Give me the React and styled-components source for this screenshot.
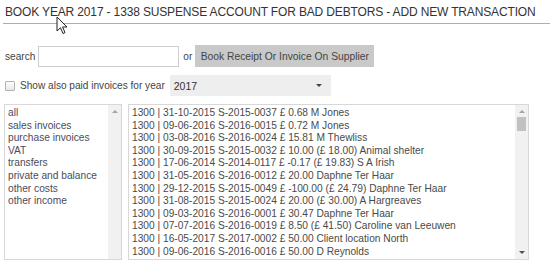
import styled, { createGlobalStyle } from 'styled-components'

const GlobalStyle = createGlobalStyle`
  html, body {
    margin: 0;
    padding: 0;
    background: #fff;
  }
  body {
    font-family: 'Liberation Sans', Arial, sans-serif;
    color: #444;
  }
`

const categories = [
  'all',
  'sales invoices',
  'purchase invoices',
  'VAT',
  'transfers',
  'private and balance',
  'other costs',
  'other income',
]

const invoices = [
  '1300 | 31-10-2015 S-2015-0037 £ 0.68 M Jones',
  '1300 | 09-06-2016 S-2016-0015 £ 0.72 M Jones',
  '1300 | 03-08-2016 S-2016-0024 £ 15.81 M Thewliss',
  '1300 | 30-09-2015 S-2015-0032 £ 10.00 (£ 18.00) Animal shelter',
  '1300 | 17-06-2014 S-2014-0117 £ -0.17 (£ 19.83) S A Irish',
  '1300 | 31-05-2016 S-2016-0012 £ 20.00 Daphne Ter Haar',
  '1300 | 29-12-2015 S-2015-0049 £ -100.00 (£ 24.79) Daphne Ter Haar',
  '1300 | 31-08-2015 S-2015-0024 £ 20.00 (£ 30.00) A Hargreaves',
  '1300 | 09-03-2016 S-2016-0001 £ 30.47 Daphne Ter Haar',
  '1300 | 07-07-2016 S-2016-0019 £ 8.50 (£ 41.50) Caroline van Leeuwen',
  '1300 | 16-05-2017 S-2017-0002 £ 50.00 Client location North',
  '1300 | 09-06-2016 S-2016-0016 £ 50.00 D Reynolds',
]

const App = () => {
  return (
    <Page>
      <GlobalStyle />
      <Title>BOOK YEAR 2017 - 1338 SUSPENSE ACCOUNT FOR BAD DEBTORS - ADD NEW TRANSACTION</Title>

      <SearchRow>
        <Label>search</Label>
        <SearchInput type="text" />
        <Label>or</Label>
        <GrayButton>Book Receipt Or Invoice On Supplier</GrayButton>
      </SearchRow>

      <FilterRow>
        <Check />
        <Label>Show also paid invoices for year</Label>
        <YearSelect>
          <span>2017</span>
          <Caret />
        </YearSelect>
      </FilterRow>

      <Lists>
        <ListBox $width={118}>
          <ListItems>
            {categories.map((c) => (
              <Item key={c} $tone="#4d4a5c">{c}</Item>
            ))}
          </ListItems>
          <Scrollbar>
            <Arrow $up />
          </Scrollbar>
        </ListBox>

        <ListBox $width={401}>
          <ListItems>
            {invoices.map((row) => (
              <Item key={row}>{row}</Item>
            ))}
          </ListItems>
          <Scrollbar>
            <Arrow $up />
            <Thumb />
            <Spacer />
            <Arrow />
          </Scrollbar>
        </ListBox>
      </Lists>

      <Cursor viewBox="0 0 12 19" width="12" height="19">
        <path
          d="M1 1 L1 15 L4.5 11.8 L7 17.5 L9 16.6 L6.6 11 L11 11 Z"
          fill="#fff"
          stroke="#222"
          strokeWidth="1"
          strokeLinejoin="round"
        />
      </Cursor>
    </Page>
  )
}
export default App

const Page = styled.div`
  position: relative;
  width: 550px;
  height: 273px;
  overflow: hidden;
`

const Title = styled.h1`
  margin: 0 0 0 3px;
  padding: 6px 0 4px 2px;
  font-size: 12px;
  font-weight: normal;
  letter-spacing: -0.15px;
  line-height: 13px;
  color: #333;
  white-space: nowrap;
  border-bottom: 1.5px solid #6ec4dc;
`

const SearchRow = styled.div`
  display: flex;
  align-items: center;
  height: 22px;
  margin: 21px 0 0 5px;
`

const Label = styled.span`
  font-size: 10.1px;
  color: #444;
  white-space: nowrap;
`

const SearchInput = styled.input`
  box-sizing: border-box;
  width: 141px;
  height: 21px;
  margin: 0 4px 0 3px;
  border: 1px solid #cfcfcf;
  background: #fff;
  outline: none;
`

const GrayButton = styled.button`
  box-sizing: border-box;
  height: 22px;
  width: 179px;
  margin-left: 3px;
  padding: 0;
  border: none;
  background: #c9c9c9;
  color: #444;
  font-family: 'Liberation Sans', Arial, sans-serif;
  font-size: 10.3px;
`

const FilterRow = styled.div`
  display: flex;
  align-items: center;
  height: 21px;
  margin: 8px 0 0 5px;
`

const Check = styled.span`
  box-sizing: border-box;
  width: 10px;
  height: 10px;
  margin-right: 5px;
  border: 1px solid #b4b4b4;
  border-radius: 1px;
  background: linear-gradient(#fdfdfd, #e8e8e8);
`

const YearSelect = styled.div`
  box-sizing: border-box;
  display: flex;
  align-items: center;
  justify-content: space-between;
  width: 161px;
  height: 21px;
  margin-left: 5px;
  padding: 0 9px 0 4px;
  background: #eeeeee;
  font-size: 10.5px;
  color: #333;
`

const Caret = styled.span`
  width: 0;
  height: 0;
  border-left: 3px solid transparent;
  border-right: 3px solid transparent;
  border-top: 3px solid #444;
`

const Lists = styled.div`
  display: flex;
  gap: 6px;
  margin: 8px 0 0 4px;
`

const ListBox = styled.div`
  box-sizing: border-box;
  display: flex;
  width: ${(p) => p.$width}px;
  height: 156px;
  border: 1px solid #d8d8d8;
  background: #fff;
`

const ListItems = styled.div`
  flex: 1;
  min-width: 0;
  padding: 2px 0 0 3px;
  overflow: hidden;
`

const Item = styled.div`
  font-size: 10.2px;
  line-height: 12.6px;
  color: ${(p) => p.$tone || '#4a4a4a'};
  white-space: nowrap;
`

const Scrollbar = styled.div`
  display: flex;
  flex-direction: column;
  align-items: center;
  width: 13px;
  background: #f1f1f1;
`

const Arrow = styled.span`
  width: 0;
  height: 0;
  margin: ${(p) => (p.$up ? '5px 0 4px' : '0 0 5px')};
  border-left: 3px solid transparent;
  border-right: 3px solid transparent;
  ${(p) => (p.$up ? 'border-bottom: 3px solid #a3a3a3;' : 'border-top: 3px solid #505050;')}
`

const Thumb = styled.span`
  width: 9px;
  height: 14px;
  background: #c1c1c1;
`

const Spacer = styled.span`
  flex: 1;
`

const Cursor = styled.svg`
  position: absolute;
  left: 56px;
  top: 16px;
`
